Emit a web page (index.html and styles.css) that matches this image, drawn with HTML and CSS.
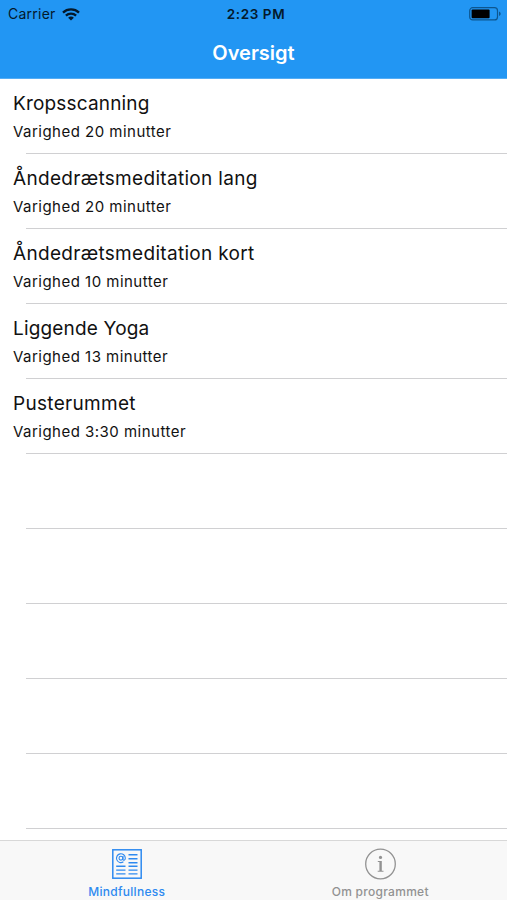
FILE: index.html
```html
<!DOCTYPE html>
<html lang="da">
<head>
<meta charset="utf-8">
<title>Oversigt</title>
<link rel="stylesheet" href="styles.css">
</head>
<body>
<div class="app">
  <header class="header">
    <div class="status">
      <div class="status-left">
        <span class="carrier">Carrier</span>
        <svg class="wifi" width="18" height="13" viewBox="0 0 18 13">
          <path d="M1 4.6C5.4.4 12.6.4 17 4.6M3.9 7.6c2.8-2.7 7.4-2.7 10.2 0" fill="none" stroke="#04192b" stroke-width="2.3"/>
          <path d="M9 12.6 6.1 9.7c1.6-1.6 4.2-1.6 5.8 0z" fill="#04192b"/>
        </svg>
      </div>
      <span class="time">2:23 PM</span>
      <div class="status-right">
        <svg class="battery" width="33" height="14" viewBox="0 0 33 14">
          <rect x=".7" y=".7" width="27.8" height="12.2" rx="3" fill="none" stroke="#0d568f" stroke-width="1.2"/>
          <rect x="2.6" y="2.6" width="18" height="8.6" rx="1" fill="#000"/>
          <path d="M30 4.6c2.2.9 2.2 3.6 0 4.5z" fill="#0d568f"/>
        </svg>
      </div>
    </div>
    <h1 class="title">Oversigt</h1>
  </header>
  <main class="list">
    <div class="row"><div class="name">Kropsscanning</div><div class="duration">Varighed 20 minutter</div></div>
    <div class="row"><div class="name wide">Åndedrætsmeditation lang</div><div class="duration">Varighed 20 minutter</div></div>
    <div class="row"><div class="name wide">Åndedrætsmeditation kort</div><div class="duration">Varighed 10 minutter</div></div>
    <div class="row"><div class="name">Liggende Yoga</div><div class="duration">Varighed 13 minutter</div></div>
    <div class="row"><div class="name wide">Pusterummet</div><div class="duration">Varighed 3:30 minutter</div></div>
    <div class="row"></div>
    <div class="row"></div>
    <div class="row"></div>
    <div class="row"></div>
    <div class="row"></div>
  </main>
  <nav class="tabs">
    <a class="tab active">
      <svg width="32" height="32" viewBox="0 0 32 32" fill="none" stroke="currentColor">
        <rect x="1.8" y="1.8" width="28.4" height="28.4" stroke-width="1.5"/>
        <path d="M17.5 6.7h9M17.5 10.7h9M17.5 14.7h9M5.2 18.3h9.3M5.2 22.1h9.3M5.2 25.9h9.3M17.5 18.3h9M17.5 22.1h9M17.5 25.9h9" stroke-width="1.4"/>
        <circle cx="9.9" cy="10.2" r="1.9" stroke-width="1.1"/>
        <path d="M12 8.1v3.1c0 1.7 2.3 1.2 2.3-1a4.4 4.4 0 1 0-1.9 3.6" stroke-width="1.1"/>
      </svg>
      <span>Mindfullness</span>
    </a>
    <a class="tab">
      <svg width="32" height="32" viewBox="0 0 32 32">
        <circle cx="16.5" cy="16" r="14.8" fill="none" stroke="currentColor" stroke-width="1.3"/>
        <circle cx="16.5" cy="9.4" r="1.6" fill="currentColor"/>
        <path d="M13.8 13h4v9.8h1.7v.9h-5.8v-.9h1.7v-8.9h-1.6z" fill="currentColor"/>
      </svg>
      <span>Om programmet</span>
    </a>
  </nav>
</div>
</body>
</html>
```
FILE: styles.css
```css
* { box-sizing: border-box; }
body { margin: 0; background: #fff; font-family: Inter, "Liberation Sans", sans-serif; }
.app { height: 900px; display: flex; flex-direction: column; overflow: hidden; }
.header { flex: none; height: 79px; background: #2296f3; border-bottom: 1px solid #54adf5; }
.status { height: 27px; display: grid; grid-template-columns: 1fr auto 1fr; align-items: center; color: #04192b; padding: 0 5px 0 8px; }
.status-left { display: flex; align-items: center; gap: 6px; }
.carrier { font-size: 14px; line-height: 28px; letter-spacing: .25px; }
.time { font-size: 13.5px; font-weight: 600; letter-spacing: .6px; margin-left: 2px; line-height: 27px; }
.status-right { display: flex; justify-content: flex-end; }
.title { margin: 0; color: #fff; text-align: center; font-size: 20px; font-weight: 600; line-height: 52px; }
.list { flex: 1; min-height: 0; overflow: hidden; }
.row { height: 75px; padding: 11px 13px 0; color: #111; background: linear-gradient(#d0d0d2, #d0d0d2) 26px 100% / 100% 1px no-repeat; }
.name { font-size: 19px; line-height: 28px; letter-spacing: .17px; white-space: nowrap; }
.wide { letter-spacing: .31px; }
.duration { font-size: 15px; line-height: 28px; letter-spacing: .48px; white-space: nowrap; }
.tabs { flex: none; height: 60px; display: flex; background: #f8f8f8; border-top: 1px solid #d8d8d8; }
.tab { flex: 1; display: flex; flex-direction: column; align-items: center; padding-top: 7px; color: #929292; font-size: 12px; font-weight: 500; letter-spacing: .28px; }
.tab svg { flex: none; }
.tab span { line-height: 16px; margin-top: 4px; }
.active { color: #2e8af0; }
```
